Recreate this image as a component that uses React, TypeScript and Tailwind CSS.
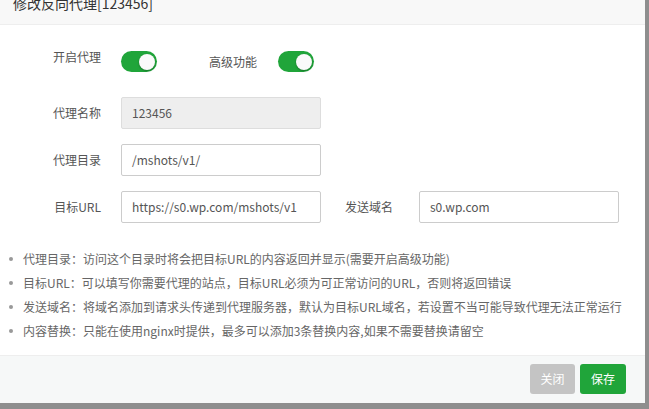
import React from "react";

const font = { fontFamily: '"Noto Sans CJK SC", "Liberation Sans", sans-serif' };

function Toggle() {
  return (
    <span className="relative block h-[21px] w-[36px] rounded-full bg-[#20a53a]">
      <span className="absolute right-[2px] top-[2.5px] h-[16px] w-[16px] rounded-full bg-[#fafafa] shadow-[0_1px_2px_rgba(0,0,0,0.3)]" />
    </span>
  );
}

function Field({
  label,
  value,
  disabled,
}: {
  label: string;
  value: string;
  disabled?: boolean;
}) {
  return (
    <div className="flex h-[32px] items-center">
      <span className="w-[101px] text-right text-[12px] text-[#555]">{label}</span>
      <div
        className={`ml-[20px] flex h-[32px] w-[200px] items-center rounded-[2px] border pl-[10px] text-[12px] text-[#555] ${
          disabled ? "border-[#ddd] bg-[#eee]" : "border-[#ccc] bg-white"
        }`}
      >
        {value}
      </div>
    </div>
  );
}

const notes = [
  "代理目录：访问这个目录时将会把目标URL的内容返回并显示(需要开启高级功能)",
  "目标URL：可以填写你需要代理的站点，目标URL必须为可正常访问的URL，否则将返回错误",
  "发送域名：将域名添加到请求头传递到代理服务器，默认为目标URL域名，若设置不当可能导致代理无法正常运行",
  "内容替换：只能在使用nginx时提供，最多可以添加3条替换内容,如果不需要替换请留空",
];

export default function App() {
  return (
    <div className="h-[409px] w-[649px] overflow-hidden bg-[#8e8e8e]" style={font}>
      <div className="w-[645px] bg-white">
        <div className="mt-[-18px] h-[43px] border-b border-[#eee] bg-[#f8f8f8] pl-[13px] text-[14px] leading-[42px] text-[#333]">
          修改反向代理[123456]
        </div>

        <div className="pt-[26px] pb-[12px]">
          <div className="flex h-[21px] items-start">
            <span className="w-[101px] text-right text-[12px] leading-[12px] text-[#555]">开启代理</span>
            <span className="ml-[20px] flex">
              <Toggle />
            </span>
            <span className="ml-[52px] text-[12px] leading-[21px] text-[#555]">高级功能</span>
            <span className="ml-[21px] flex">
              <Toggle />
            </span>
          </div>

          <div className="mt-[25px] flex flex-col gap-[15px]">
            <Field label="代理名称" value="123456" disabled />
            <Field label="代理目录" value="/mshots/v1/" />
            <div className="flex items-center">
              <Field label="目标URL" value="https://s0.wp.com/mshots/v1" />
              <span className="w-[72px] text-right text-[12px] text-[#555]">发送域名</span>
              <div className="ml-[26px] flex h-[32px] w-[200px] items-center rounded-[2px] border border-[#ccc] pl-[10px] text-[12px] text-[#555]">
                s0.wp.com
              </div>
            </div>
          </div>

          <ul className="mt-[24px]">
            {notes.map((n) => (
              <li key={n} className="flex h-[24px] items-center text-[12px] text-[#666]">
                <span className="ml-[9px] mr-[10px] h-[4px] w-[4px] rounded-full bg-[#999]" />
                {n}
              </li>
            ))}
          </ul>
        </div>

        <div className="flex h-[48px] justify-end gap-[5px] border-t border-[#eee] bg-[#f6f8f8] pr-[19px] pt-[8px]">
          <button className="h-[30px] w-[45px] rounded-[3px] bg-[#c4c4c4] text-[12px] text-white">关闭</button>
          <button className="h-[30px] w-[46px] rounded-[3px] bg-[#20a53a] text-[12px] text-white">保存</button>
        </div>
      </div>
    </div>
  );
}
